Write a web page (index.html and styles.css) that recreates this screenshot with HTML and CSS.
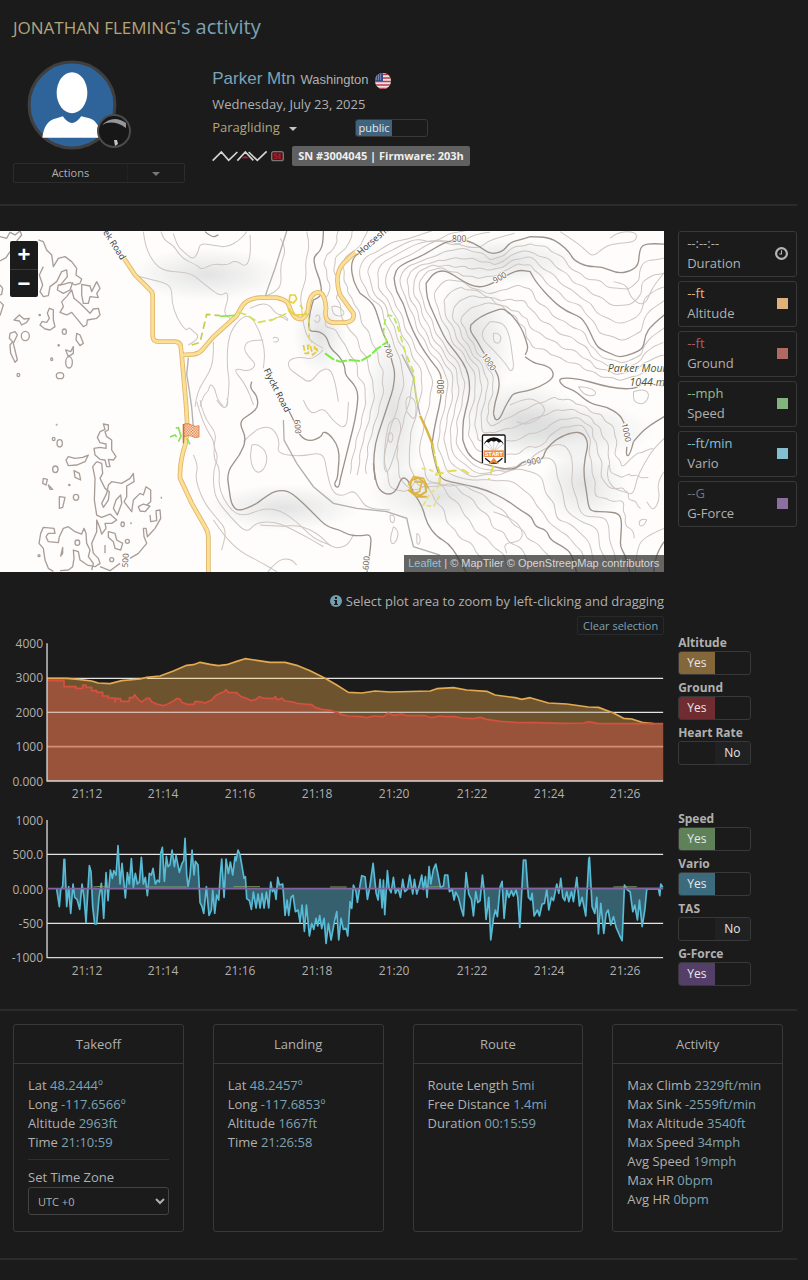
FILE: index.html
```html
<!doctype html>
<html lang="en">
<head>
<meta charset="UTF-8">
<meta name="viewport" content="width=device-width, initial-scale=1">
<title>Parker Mtn - Paragliding activity</title>
<link rel="stylesheet" href="styles.css">
</head>
<body>

<div class="page">

   <h1 class="title"><a class="pilot" href="#">JONATHAN FLEMING</a>'s activity</h1>

   <div class="summary">
      <div class="profile">
         <div class="avatar">
            <svg class="avatar-photo" viewBox="0 0 88 88" aria-label="Pilot">
               <circle cx="44" cy="44" r="42" fill="#2f649b" stroke="#3f3f40" stroke-width="3"/>
               <ellipse cx="44" cy="32" rx="15" ry="20" fill="#fff"/>
               <path d="M15,76 Q17,59 29,57 L35,55 Q44,68 53,55 L61,57 Q71,60 72,76z" fill="#fff"/>
            </svg>
            <svg class="avatar-badge" viewBox="0 0 36 36">
               <circle cx="18" cy="18" r="16" fill="#171718" stroke="#4b4b4c" stroke-width="2"/>
               <path d="M6,12 Q17,1 30,10 L30,15 Q17,6 6,12z" fill="#97979b"/>
               <path d="M18,27 l3,0 1,4 -3,2z" fill="#c5c5c5"/>
            </svg>
         </div>
         <button class="actions" type="button"><span class="actions-text">Actions</span><span class="actions-caret"><i class="caret"></i></span></button>
      </div>

      <div class="info">
         <div class="place">
            <a class="site" href="#">Parker Mtn</a> <span>Washington</span>
            <svg class="flag" viewBox="0 0 18 18">
               <clipPath id="flag-clip"><circle cx="9" cy="9" r="8"/></clipPath>
               <g clip-path="url(#flag-clip)">
                  <rect width="18" height="18" fill="#eee3e4"/>
                  <path d="M0,2.500h18M0,6h18M0,9.500h18M0,13h18M0,16.500h18" stroke="#b93a48" stroke-width="1.600"/>
                  <rect width="9" height="9" fill="#3b4b86"/>
                  <path d="M2,3h6M2,5h6M2,7h6" stroke="#c8cce0" stroke-width=".8" stroke-dasharray="1 1"/>
               </g>
            </svg>
         </div>
         <div class="date">Wednesday, July 23, 2025</div>
         <div class="sport-row">
            <button class="sport" type="button">Paragliding <i class="caret"></i></button>
            <label class="switch switch-public">
               <input type="checkbox" checked aria-label="Public activity">
               <span class="half on">public</span><span class="half"></span>
            </label>
         </div>
         <div class="device">
            <svg class="device-logo" viewBox="0 0 216 36" fill="none">
               <path d="M2,32 L28,6 L50,31 L76,6 M76,32 L100,6 L124,31 M110,6 L136,31 L164,4" stroke="#d5d5d5" stroke-width="5"/>
               <path d="M88,25 L100,18 L112,25z" fill="#b22336"/>
               <rect x="179" y="5" width="35" height="27" rx="6" fill="#5a1419" stroke="#77777a" stroke-width="4"/>
               <path d="M196,12 h-9 v6 h8 v7 h-9 M207,12 h-6 v13 h6 M201,18 h6" stroke="#b32333" stroke-width="3"/>
            </svg>
            <span class="device-label">SN #3004045 | Firmware: 203h</span>
         </div>
      </div>
   </div>

   <hr>

   <div class="row">
      <div class="map">
         <svg id="map" class="map-tiles" viewBox="0 0 1992 1023" preserveAspectRatio="xMidYMid slice" fill="none">
            <defs>
               <radialGradient id="shade">
                  <stop offset="0" stop-color="#777c82" stop-opacity=".2"/>
                  <stop offset="1" stop-color="#777c82" stop-opacity="0"/>
               </radialGradient>
               <pattern id="checks" width="8" height="8" patternUnits="userSpaceOnUse">
                  <rect width="8" height="8" fill="#e06a22"/><path d="M0,0h4v4h4v4h-4v-4h-4z" fill="#fff"/>
               </pattern>
            </defs>
            <rect width="1992" height="1023" fill="#fefdfc"/>
            <g fill="url(#shade)">
               <ellipse cx="620" cy="130" rx="230" ry="80"/>
               <ellipse cx="1560" cy="560" rx="190" ry="110"/>
               <ellipse cx="1700" cy="600" rx="260" ry="90"/>
               <ellipse cx="1180" cy="540" rx="90" ry="270"/>
               <ellipse cx="1420" cy="330" rx="120" ry="230"/>
               <ellipse cx="1320" cy="790" rx="220" ry="90"/>
               <ellipse cx="850" cy="830" rx="230" ry="70"/>
               <ellipse cx="1750" cy="760" rx="130" ry="120"/>
               <ellipse cx="960" cy="310" rx="80" ry="120"/>
               <ellipse cx="1500" cy="90" rx="240" ry="70"/>
            </g>

            <!-- contour lines are added here by script.js -->
            <g id="contours"></g>

            <!-- patches on the flat ground to the west -->
            <g class="patches" transform="translate(0,-18)">
               <path d="M0,35 20,40 30,22 45,30 60,18 65,30 50,48M0,108 18,98 30,80M0,180 8,190 5,208 0,210M0,230 10,240 0,272"/>
               <path d="M115,45 130,50 140,75 155,90 160,125 175,100 195,95 215,110 230,130 228,150 245,162 240,175 225,180 210,172 190,178 175,180 172,195 190,205 210,195 218,172"/>
               <path d="M130,125 118,150 128,180 120,200 130,215 145,212 150,185 170,170 185,140 200,135 202,155 180,182"/>
               <path d="M245,178 270,183 275,200 290,170 300,190 290,205 295,218 270,215 265,235 250,235 245,210z"/>
               <path d="M215,195 200,215 185,230 190,245 180,262 200,270 215,262 230,280 250,305 260,300 262,285 290,280 300,270 295,250 280,252 270,265 240,235 222,220z"/>
               <path d="M148,250 160,255 160,285 165,305 150,315 135,312 120,300 126,290 140,292 148,280 142,265z"/>
               <path d="M42,285 58,270 72,282 88,280 80,292 65,300 58,288z"/>
               <path d="M30,325 45,320 52,330 40,355 52,405 45,412 32,385 30,360 38,350 28,340z"/>
               <path d="M230,325 240,330 250,355 240,362 228,345zM197,375 212,380 220,365 220,385 205,395z"/>
               <ellipse cx="76" cy="333" rx="12" ry="14"/><ellipse cx="193" cy="320" rx="6" ry="8"/>
               <ellipse cx="180" cy="452" rx="11" ry="9"/><ellipse cx="207" cy="412" rx="10" ry="17"/>
               <ellipse cx="55" cy="450" rx="4" ry="5"/><ellipse cx="155" cy="403" rx="3" ry="4"/>
               <ellipse cx="119" cy="270" rx="2" ry="2"/><ellipse cx="176" cy="361" rx="2" ry="2"/>
            </g>
            <g class="patches" transform="translate(0,507)">
               <path d="M310,72 325,75 325,90 315,95 320,110 335,120 335,150 348,170 340,180 325,178 330,200 320,200 315,180 300,178 285,165 282,145 300,142 318,145 318,132 300,128 292,112 300,95 315,88z"/>
               <path d="M290,185 305,190 308,220 300,235 315,265 328,275 325,300 310,322 305,310 320,280 325,255 335,245 365,250 390,235 400,220 402,245 380,258 380,290 372,305 395,335 400,300 420,280 430,285 438,260 452,270 452,305 440,315"/>
               <path d="M290,185 278,200 285,235 283,300 290,345 305,352 330,342 350,360 335,370 315,370 318,385 305,402 300,385 290,360 290,395 275,430 280,460 295,475 300,490 285,500 262,495 240,480 235,455 220,450 222,475 218,500 205,510 180,512"/>
               <path d="M160,514 145,505 135,480 130,445 117,430 122,400 130,382 162,385 165,400 145,400 138,410 145,425 175,428 178,410 190,385 205,380 225,395 245,402 252,385 258,400 260,430 270,450 265,470 280,490 275,510"/>
               <path d="M340,325 348,300 362,285 365,310 352,345zM415,320 430,312 450,318 435,335 420,333z"/>
               <path d="M450,345 452,365 470,362 468,332 480,330 482,355 465,385 442,410 438,385 430,385 432,410 440,430 415,460 390,475M300,500 330,512 360,490"/>
               <path d="M325,395 345,400 350,420 368,430 362,450 345,445 340,425 325,412z"/>
               <path d="M198,180 205,170 225,175 248,172 265,165 255,185 230,195 205,197z"/>
               <path d="M222,212 238,220 242,240 225,232zM130,235 142,238 138,255 128,250zM145,255 158,268 150,268zM178,290 195,292 188,322 178,325z"/>
               <path d="M182,468 188,442 188,460zM315,435V460M484,290v6"/>
               <ellipse cx="179" cy="130" rx="8" ry="11"/><ellipse cx="161" cy="117" rx="4" ry="5"/>
               <ellipse cx="166" cy="208" rx="8" ry="10"/><ellipse cx="228" cy="292" rx="8" ry="9"/>
               <ellipse cx="232" cy="428" rx="7" ry="8"/><ellipse cx="368" cy="373" rx="5" ry="7"/>
               <ellipse cx="382" cy="424" rx="6" ry="6"/><ellipse cx="335" cy="479" rx="6" ry="6"/>
               <ellipse cx="170" cy="74" rx="1" ry="1"/><ellipse cx="208" cy="255" rx="2" ry="2"/>
               <ellipse cx="117" cy="467" rx="3" ry="3"/><ellipse cx="393" cy="370" rx="1" ry="1"/>
            </g>

            <path class="trail" d="M860,0 825,112 800,182 795,200M850,567 852,627 890,697 940,767 1000,817 1070,832 1160,842 1220,862 1230,907 1240,947 1320,972M565,380 560,430 568,480 575,530 580,590M1205,370 1240,440 1250,510 1260,552"/>
            <g class="road" transform="translate(0,-18)">
               <path d="M370,97 405,150 450,195 Q458,202 458,212V335Q460,350 475,350H525Q542,352 542,365L545,390 558,540 562,605 557,655 Q538,710 540,760L575,835 615,905Q625,920 625,940V1045M545,390 580,388Q600,386 612,368 L640,335 710,272 725,245Q740,220 780,218H830Q865,225 868,245 Q880,285 905,282 925,270 925,245 930,200 960,202 975,210 978,250 970,290 1000,293L1035,293Q1065,290 1060,265 L1020,210 Q1000,150 1030,115 L1065,82"/>
               <path class="road-fill" d="M370,97 405,150 450,195 Q458,202 458,212V335Q460,350 475,350H525Q542,352 542,365L545,390 558,540 562,605 557,655 Q538,710 540,760L575,835 615,905Q625,920 625,940V1045M545,390 580,388Q600,386 612,368 L640,335 710,272 725,245Q740,220 780,218H830Q865,225 868,245 Q880,285 905,282 925,270 925,245 930,200 960,202 975,210 978,250 970,290 1000,293L1035,293Q1065,290 1060,265 L1020,210 Q1000,150 1030,115 L1065,82"/>
            </g>

            <!-- flight track -->
            <g class="track" transform="translate(780,-18)">
               <path stroke="#c5cc4a" stroke-dasharray="22 12" d="M-205,360 -180,352 -170,310 -160,268 -120,272"/>
               <path stroke="#8ee45a" d="M-120,274 -75,271"/>
               <path stroke="#d5df55" stroke-dasharray="24 9" d="M-65,262 -40,270 -5,292 40,283 75,268 90,250"/>
               <path stroke="#e8cf3c" d="M88,220 90,210 105,210 110,222 100,234 88,230zM85,255 105,270 140,268"/>
               <path stroke="#e0d84a" stroke-dasharray="14 10" d="M120,240 145,275 148,305 147,340 155,352M160,370 185,375"/>
               <path stroke="#e4c840" stroke-dasharray="18 5" d="M130,360 135,385 145,385 143,362 150,360 158,390 172,378 160,360"/>
               <path stroke="#7bea4d" stroke-width="6" stroke-dasharray="34 5" d="M195,385 220,403 240,410 270,405 302,408 330,392 350,372 380,352"/>
               <path stroke="#a5ea52" stroke-dasharray="18 9" d="M380,352 370,320 375,285 385,270 400,274 412,302"/>
               <path stroke="#c9e650" stroke-dasharray="20 12" d="M412,302 425,345 435,380 460,440 467,510 475,545"/>
               <path stroke="#d9b440" stroke-width="7" d="M480,572 500,615 518,660"/>
               <path stroke="#ddd04a" stroke-width="6" stroke-dasharray="28 5" d="M518,660 528,715 540,745 538,775"/>
               <path stroke="#e2dd52" stroke-width="6" stroke-dasharray="26 14" d="M525,750 570,738 610,735 635,752M700,722 685,765"/>
               <path stroke="#d9b440" stroke-width="6" d="M455,765 475,758 495,775 498,800 480,812 455,800 450,780zM445,795 470,815 500,815"/>
               <path stroke="#ddb74e" d="M462,770 485,772 478,800 462,805M445,780 460,755 490,760 505,790"/>
               <path stroke="#e6df7a" stroke-dasharray="14 8" d="M485,730 510,735 540,750 535,785 510,805 490,840 520,845 540,810"/>
            </g>

            <g class="map-text">
               <g class="street">
                  <text transform="translate(308,4) rotate(57)">ek Road</text>
                  <text transform="translate(1081,74) rotate(-41)">Horseshoe</text>
                  <text transform="translate(790,418) rotate(63)">Flyckt Road</text>
               </g>
               <g class="height">
                  <text x="1356" y="34">800</text>
                  <text transform="translate(1485,158) rotate(-30)">900</text>
                  <text transform="translate(1443,374) rotate(56)">1000</text>
                  <text transform="translate(1150,342) rotate(72)">700</text>
                  <text transform="translate(1332,489) rotate(-90)">800</text>
                  <text transform="translate(882,566) rotate(85)">600</text>
                  <text transform="translate(1105,1018) rotate(-85)">600</text>
                  <text transform="translate(383,1010) rotate(-85)">500</text>
                  <text transform="translate(1582,704) rotate(-12)">900</text>
                  <text transform="translate(1864,578) rotate(78)">1000</text>
               </g>
               <g class="peak">
                  <text x="1823" y="422">Parker Mountain</text>
                  <text x="1888" y="464">1044 m</text>
               </g>
            </g>

            <!-- landing flag -->
            <path d="M550,579 V637" stroke="#e06a22" stroke-width="4"/>
            <path d="M552,579 Q565,575 575,582 T597,584 V618 Q585,622 575,616 T552,618z" fill="url(#checks)" stroke="#e06a22" stroke-width="2"/>
            <path d="M527,591 535,590 543,615 535,632M510,618 525,612 530,618M560,622 570,640" stroke="#8be05a" stroke-width="5"/>
            <!-- takeoff marker -->
            <g transform="translate(1445,610)">
               <rect width="72" height="88" rx="6" fill="#fff"/>
               <path d="M2,86V6Q2,2 6,2H66Q70,2 70,6V86" stroke="#111" stroke-width="4"/>
               <path d="M6,31 Q12,12 36,9 Q60,12 66,31 L58,22 51,25 44,19 36,22 28,19 21,25 14,22z" fill="#111"/>
               <path d="M8,30 32,48M21,25 34,48M36,22V48M51,25 38,48M64,30 40,48" stroke="#777" stroke-width="1"/>
               <rect x="6" y="48" width="60" height="20" fill="#f08a3c"/>
               <text x="36" y="66" class="start">START</text>
               <path d="M10,72 28,86H44L62,72" stroke="#111" stroke-width="4"/>
               <path d="M36,70 52,90 36,84 20,90z" fill="#f08a3c"/>
            </g>
         </svg>
         <div class="zoom">
            <button type="button" aria-label="Zoom in">+</button>
            <button type="button" aria-label="Zoom out">−</button>
         </div>
         <div class="attribution"><a href="#">Leaflet</a> | © MapTiler © OpenStreepMap contributors</div>
      </div>

      <div class="side stats">
         <div class="stat">
            <div><div class="value">--:--:--</div>Duration</div>
            <svg class="clock" viewBox="0 0 12 12" fill="none" stroke="#b5b5b5"><circle cx="6" cy="6" r="5" stroke-width="2"/><path d="M6,3v3.500H4" stroke-width="1"/></svg>
         </div>
         <div class="stat altitude"><div><div class="value">--ft</div>Altitude</div><i class="dot"></i></div>
         <div class="stat ground"><div><div class="value">--ft</div>Ground</div><i class="dot"></i></div>
         <div class="stat speed"><div><div class="value">--mph</div>Speed</div><i class="dot"></i></div>
         <div class="stat vario"><div><div class="value">--ft/min</div>Vario</div><i class="dot"></i></div>
         <div class="stat gforce"><div><div class="value">--G</div>G-Force</div><i class="dot"></i></div>
      </div>
   </div>

   <div class="row plots">
      <div class="plot-area">
         <div class="hint">
            <svg class="hint-icon" viewBox="0 0 12 12"><circle cx="6" cy="6" r="6" fill="#6f9fb0"/><path d="M5,2h2v2H5zM4,5h3v4h1v1H4V9h1V6H4z" fill="#1b1b1b"/></svg>
            Select plot area to zoom by left-clicking and dragging
         </div>
         <div class="clear-row"><button class="clear" type="button">Clear selection</button></div>

         <svg class="chart" viewBox="0 0 664 166">
            <g transform="translate(0,-6) scale(.33333)">
               <path d="M141,145H1989M141,247H1989" stroke="#e4e4e4" stroke-width="4"/>
               <path fill="#6e542e" d="M141,145 200,145 235,148 275,153 295,159 330,161 365,152 420,147 440,142 480,138 520,123 560,106 580,104 600,97 630,103 655,107 680,104 710,94 735,86 770,91 810,97 855,97 890,106 930,122 975,145 1010,165 1045,187 1085,189 1125,183 1170,186 1290,183 1310,176 1360,173 1400,180 1460,184 1485,195 1545,203 1565,208 1590,203 1645,219 1700,222 1765,231 1795,232 1840,249 1870,265 1895,267 1930,278 1989,281V453H141z"/>
               <path d="M141,247H1830" stroke="#fff" stroke-opacity=".85" stroke-width="3"/>
               <path d="M440,145H975" stroke="#ead8b0" stroke-width="4"/>
               <path fill="#99533b" d="M141,152H192V170H228V175H248V165H258V172H275V182H290V187H308V198H325V204H345V216L348,206H362V214H388V203H398L404,194 412,205 425,216 440,205 448,205 455,215 470,222 490,227 505,221 520,213 530,205 540,207 545,217 560,223 582,223 585,214 605,216 615,219 635,210 645,198 660,190 672,185 678,179 685,187 710,188 722,199 742,206 752,212 768,208 778,200 790,204 820,206 826,200 832,210 845,204 855,213 880,216 890,220 910,222 935,224 945,232 965,238 990,241 1010,247 1025,254 1045,258 1085,260 1100,263 1120,258 1150,260 1165,249 1180,256 1205,252 1220,257 1275,257 1295,263 1320,258 1340,260 1365,260 1385,264 1420,266 1440,262 1460,268 1500,274 1545,277 1600,278 1690,280 1750,279 1765,275 1795,281 1989,281V453H141z"/>
               <path d="M141,247H1010" stroke="#fff" stroke-opacity=".8" stroke-width="3"/>
               <path d="M141,350H1989" stroke="#d38f76" stroke-width="5"/>
               <path class="line altitude-line" d="M141,145 200,145 235,148 275,153 295,159 330,161 365,152 420,147 440,142 480,138 520,123 560,106 580,104 600,97 630,103 655,107 680,104 710,94 735,86 770,91 810,97 855,97 890,106 930,122 975,145 1010,165 1045,187 1085,189 1125,183 1170,186 1290,183 1310,176 1360,173 1400,180 1460,184 1485,195 1545,203 1565,208 1590,203 1645,219 1700,222 1765,231 1795,232 1840,249 1870,265 1895,267 1930,278 1960,281"/>
               <path class="line ground-line" d="M141,152H192V170H228V175H248V165H258V172H275V182H290V187H308V198H325V204H345V216L348,206H362V214H388V203H398L404,194 412,205 425,216 440,205 448,205 455,215 470,222 490,227 505,221 520,213 530,205 540,207 545,217 560,223 582,223 585,214 605,216 615,219 635,210 645,198 660,190 672,185 678,179 685,187 710,188 722,199 742,206 752,212 768,208 778,200 790,204 820,206 826,200 832,210 845,204 855,213 880,216 890,220 910,222 935,224 945,232 965,238 990,241 1010,247 1025,254 1045,258 1085,260 1100,263 1120,258 1150,260 1165,249 1180,256 1205,252 1220,257 1275,257 1295,263 1320,258 1340,260 1365,260 1385,264 1420,266 1440,262 1460,268 1500,274 1545,277 1600,278 1690,280 1750,279 1765,275 1795,281 1989,281"/>
               <path class="axis" d="M141,40V453H1989"/>
            </g>
            <g class="tick tick-y"><text x="43" y="12">4000</text><text x="43" y="46">3000</text><text x="43" y="81">2000</text><text x="43" y="115">1000</text><text x="43" y="150">0.000</text></g>
            <g class="tick tick-x"><text x="87" y="162">21:12</text><text x="163" y="162">21:14</text><text x="240" y="162">21:16</text><text x="317" y="162">21:18</text><text x="394" y="162">21:20</text><text x="472" y="162">21:22</text><text x="549" y="162">21:24</text><text x="625" y="162">21:26</text></g>
         </svg>

         <svg class="chart chart-vario" viewBox="0 0 664 166">
            <g transform="translate(0,-3) scale(.33333)">
               <path d="M141,133H1989M141,340H1989" stroke="#e4e4e4" stroke-width="4"/>
               <path class="line vario-line" d="M170,237 178,290 182,240 188,228 192,148 194,148 200,290 206,230 212,310 219,222 224,262 231,268 239,298 246,222 252,262 258,337 264,235 268,167 273,185 278,290 284,342 290,342 297,262 304,220 311,325 318,188 324,272 331,180 337,205 341,182 348,195 354,107 360,222 366,160 372,222 376,264 382,188 388,222 394,146 400,232 406,190 412,222 418,216 424,142 430,222 436,202 442,257 448,190 454,195 459,175 466,222 472,210 478,216 482,130 487,112 493,214 499,139 504,170 510,164 516,120 523,170 528,136 538,187 546,160 551,152 555,85 560,195 564,230 570,195 576,120 582,195 586,154 594,165 600,278 606,290 611,310 619,230 627,316 634,300 638,240 644,310 650,255 656,270 661,190 665,147 672,262 678,147 685,190 691,156 698,195 705,140 708,152 714,120 720,135 726,170 732,205 736,200 740,266 748,272 754,298 760,246 768,294 774,252 780,294 786,250 792,294 799,246 806,294 812,216 817,245 823,238 828,268 833,202 838,225 848,222 855,316 861,270 866,316 873,262 879,256 886,305 894,300 900,337 906,285 913,364 919,285 928,378 935,340 941,358 948,325 953,348 959,317 965,356 972,325 978,400 985,340 993,390 1002,340 1010,305 1016,390 1023,325 1030,358 1038,355 1043,378 1050,275 1055,295 1060,225 1068,245 1072,277 1080,225 1085,197 1095,200 1102,268 1108,238 1119,160 1128,248 1134,270 1140,208 1146,294 1150,210 1154,314 1162,182 1167,235 1173,248 1180,202 1186,250 1194,235 1201,262 1208,208 1214,245 1222,238 1229,195 1238,252 1243,208 1250,252 1258,225 1265,195 1270,238 1276,200 1281,262 1287,170 1292,222 1300,178 1307,162 1313,190 1321,232 1330,228 1334,195 1343,195 1348,245 1356,238 1362,270 1367,246 1375,262 1384,298 1390,318 1398,188 1406,252 1414,268 1420,318 1427,245 1433,278 1440,272 1447,195 1452,240 1458,328 1466,262 1472,390 1480,325 1486,300 1492,320 1500,230 1506,214 1512,325 1520,240 1526,262 1534,242 1540,258 1548,240 1553,262 1559,352 1564,262 1570,150 1577,150 1585,262 1592,270 1596,250 1602,318 1612,300 1618,318 1626,282 1633,280 1640,238 1646,300 1654,262 1660,272 1670,222 1676,250 1682,205 1688,262 1694,272 1700,245 1706,275 1714,245 1720,275 1730,202 1738,288 1746,262 1757,318 1766,148 1768,142 1776,290 1784,310 1790,262 1795,372 1802,280 1811,370 1818,310 1824,300 1832,345 1840,320 1848,352 1858,375 1866,392 1873,225 1882,240 1890,245 1898,305 1904,285 1912,330 1918,270 1926,350 1934,300 1940,237 1975,237 1979,257 1982,222 1988,232"/>
               <path class="axis" d="M141,30V443H1989"/>
               <path d="M280,231Q300,228 320,231M440,231H560M700,230H780M990,231H1040M1280,231 1320,230M1840,231 1910,230" stroke="#7ea35f" stroke-width="3"/>
               <path d="M141,236H1989" stroke="#80649f" stroke-width="5"/>
            </g>
            <g class="tick tick-y"><text x="43" y="12">1000</text><text x="43" y="46">500.0</text><text x="43" y="81">0.000</text><text x="43" y="115">-500</text><text x="43" y="149">-1000</text></g>
            <g class="tick tick-x"><text x="87" y="162">21:12</text><text x="163" y="162">21:14</text><text x="240" y="162">21:16</text><text x="317" y="162">21:18</text><text x="394" y="162">21:20</text><text x="472" y="162">21:22</text><text x="549" y="162">21:24</text><text x="625" y="162">21:26</text></g>
         </svg>
      </div>

      <div class="side toggles">
         <div class="toggle altitude"><label for="t-altitude">Altitude</label><label class="switch"><input id="t-altitude" type="checkbox" checked><span class="half on">Yes</span><span class="half"></span></label></div>
         <div class="toggle ground"><label for="t-ground">Ground</label><label class="switch"><input id="t-ground" type="checkbox" checked><span class="half on">Yes</span><span class="half"></span></label></div>
         <div class="toggle"><label for="t-hr">Heart Rate</label><label class="switch"><input id="t-hr" type="checkbox"><span class="half"></span><span class="half off">No</span></label></div>
         <div class="toggle toggle-first speed"><label for="t-speed">Speed</label><label class="switch"><input id="t-speed" type="checkbox" checked><span class="half on">Yes</span><span class="half"></span></label></div>
         <div class="toggle vario"><label for="t-vario">Vario</label><label class="switch"><input id="t-vario" type="checkbox" checked><span class="half on">Yes</span><span class="half"></span></label></div>
         <div class="toggle"><label for="t-tas">TAS</label><label class="switch"><input id="t-tas" type="checkbox"><span class="half"></span><span class="half off">No</span></label></div>
         <div class="toggle gforce"><label for="t-g">G-Force</label><label class="switch"><input id="t-g" type="checkbox" checked><span class="half on">Yes</span><span class="half"></span></label></div>
      </div>
   </div>

   <hr>

   <div class="cards">
      <div class="card">
         <h2>Takeoff</h2>
         <div class="card-body">
            <p>Lat <b>48.2444º</b></p>
            <p>Long <b>-117.6566º</b></p>
            <p>Altitude <b>2963ft</b></p>
            <p>Time <b>21:10:59</b></p>
            <div class="zone">
               <label for="zone">Set Time Zone</label>
               <select id="zone"><option>UTC +0</option></select>
            </div>
         </div>
      </div>
      <div class="card">
         <h2>Landing</h2>
         <div class="card-body">
            <p>Lat <b>48.2457º</b></p>
            <p>Long <b>-117.6853º</b></p>
            <p>Altitude <b>1667ft</b></p>
            <p>Time <b>21:26:58</b></p>
         </div>
      </div>
      <div class="card">
         <h2>Route</h2>
         <div class="card-body">
            <p>Route Length <b>5mi</b></p>
            <p>Free Distance <b>1.4mi</b></p>
            <p>Duration <b>00:15:59</b></p>
         </div>
      </div>
      <div class="card">
         <h2>Activity</h2>
         <div class="card-body">
            <p>Max Climb <b>2329ft/min</b></p>
            <p>Max Sink <b>-2559ft/min</b></p>
            <p>Max Altitude <b>3540ft</b></p>
            <p>Max Speed <b>34mph</b></p>
            <p>Avg Speed <b>19mph</b></p>
            <p>Max HR <b>0bpm</b></p>
            <p>Avg HR <b>0bpm</b></p>
         </div>
      </div>
   </div>

   <hr>
</div>

<script src="script.js"></script>
</body>
</html>
```

FILE: styles.css
```css
* {
   box-sizing: border-box;
}

body {
   margin: 0;
   background: #1b1b1b;
   color: #b0b0b0;
   font-family: "Open Sans", "Noto Sans", sans-serif;
   font-size: 13px;
   line-height: 20px;
}

h1, h2, p {
   margin: 0;
   font-weight: normal;
}

a {
   text-decoration: none;
}

b {
   font-weight: normal;
   color: #7ba3b5;
}

button, select {
   font-family: inherit;
   color: inherit;
}

hr {
   margin: 0;
   border: 0;
   border-top: 2px solid #2b2b2b;
}

.page {
   padding-right: 11px;
}

.title {
   padding: 12px 13px 0;
   font-size: 20px;
   line-height: 30px;
   color: #7ba3b5;
}

.pilot {
   font-size: 17px;
   color: #b3a57d;
}

.summary {
   display: grid;
   grid-template-columns: 1fr 3fr;
   padding-top: 17px;
   height: 161px;
}

.profile {
   padding: 0 14px 0 13px;
}

.avatar {
   position: relative;
   height: 103px;
   padding-left: 14px;
}

.avatar-photo {
   display: block;
   width: 90px;
   height: 90px;
}

.avatar-badge {
   position: absolute;
   left: 83px;
   top: 53px;
   width: 36px;
   height: 36px;
}

.actions {
   display: flex;
   width: 100%;
   height: 20px;
   padding: 0;
   border: 1px solid #2c2c2c;
   border-radius: 2px;
   background: none;
   font-size: 11px;
   line-height: 18px;
}

.actions-text {
   flex: 2;
   border-right: 1px solid #222;
}

.actions-caret {
   flex: 1;
}

.caret {
   display: inline-block;
   border: 4px solid transparent;
   border-top-color: currentColor;
   border-bottom: 0;
   vertical-align: middle;
}

.actions-caret .caret {
   color: #777;
}

.info {
   padding-left: 13px;
}

.place {
   display: flex;
   align-items: baseline;
   gap: 5px;
   height: 34px;
   padding-top: 9px;
   font-family: "Liberation Sans", Arial, sans-serif;
}

.site {
   font-size: 17px;
   color: #7ba3b5;
}

.flag {
   width: 18px;
   height: 18px;
   align-self: flex-start;
   margin-top: 3px;
}

.sport-row {
   display: flex;
   align-items: center;
   height: 26px;
}

.sport {
   width: 143px;
   padding: 0;
   border: 0;
   background: none;
   font-size: 13px;
   color: #b3a57d;
   text-align: left;
}

.sport .caret {
   margin-left: 6px;
   color: #c5c5c5;
}

.device {
   display: flex;
   align-items: center;
   gap: 8px;
   height: 31px;
}

.device-logo {
   width: 72px;
   height: 12px;
}

.device-label {
   padding: 0 6px;
   border-radius: 2px;
   background: #606060;
   color: #eee;
   font-size: 11px;
   font-weight: bold;
}

.row {
   display: grid;
   grid-template-columns: 5fr 1fr;
   padding-top: 25px;
}

.side {
   padding-left: 14px;
}

/* map */
.map {
   position: relative;
   height: 341px;
   overflow: hidden;
}

.map-tiles {
   display: block;
   width: 100%;
   height: 100%;
}

.contour {
   stroke: #cdc5c0;
   stroke-width: 3;
}

.contour-index {
   stroke: #9d938b;
   stroke-width: 4;
}

.patches {
   stroke: #a99e97;
   stroke-width: 4;
   stroke-linejoin: round;
}

.trail {
   stroke: #b3b0ae;
   stroke-width: 4;
}

.road {
   stroke: #dfb468;
   stroke-width: 14;
   stroke-linejoin: round;
}

.road-fill {
   stroke: #fbdf95;
   stroke-width: 9;
}

.track {
   stroke-width: 5;
   stroke-linejoin: round;
}

.map-text {
   font-family: "Noto Sans", sans-serif;
   stroke: #fff;
   stroke-width: 5;
   paint-order: stroke;
}

.street {
   font-size: 27px;
   fill: #444;
}

.height {
   font-size: 25px;
   fill: #7a6350;
}

.peak {
   font-family: "Open Sans", sans-serif;
   font-size: 32px;
   font-style: italic;
   fill: #4f5333;
}

.start {
   font: bold 18px "Liberation Mono", monospace;
   text-anchor: middle;
   fill: #fff;
}

.zoom {
   position: absolute;
   left: 10px;
   top: 10px;
   width: 28px;
   background: #1b1b1b;
   border-radius: 2px;
}

.zoom button {
   display: block;
   width: 28px;
   height: 28px;
   padding: 0;
   border: 0;
   background: none;
   color: #fff;
   font: bold 22px/28px "Liberation Sans", Arial, sans-serif;
}

.zoom button + button {
   border-top: 1px solid #3a3a3a;
}

.attribution {
   position: absolute;
   right: 0;
   bottom: 0;
   padding: 0 5px 0 4px;
   background: rgba(50, 50, 50, .75);
   color: #d5d5d5;
   font: 11px/17px "Liberation Sans", Arial, sans-serif;
}

.attribution a {
   color: #8cc4dc;
}

/* live values beside the map */
.stats {
   display: flex;
   flex-direction: column;
   gap: 4px;
}

.stat {
   display: flex;
   align-items: center;
   justify-content: space-between;
   height: 46px;
   padding: 0 8px 2px;
   border: 1px solid #383838;
   border-radius: 3px;
}

.clock {
   width: 13px;
   height: 13px;
}

.dot {
   width: 11px;
   height: 11px;
}

.altitude .value { color: #deb887; }
.altitude .dot { background: #deb27a; }
.altitude .on { background: #84663b; }
.ground .value { color: #a85f66; }
.ground .dot { background: #b06a62; }
.ground .on { background: #6f2d31; }
.speed .value { color: #8dc08a; }
.speed .dot { background: #84b47e; }
.speed .on { background: #5f8158; }
.vario .value { color: #82c1dc; }
.vario .dot { background: #84bfd0; }
.vario .on { background: #3b6b7c; }
.gforce .value { color: #77717f; }
.gforce .dot { background: #8b6fa0; }
.gforce .on { background: #533f68; }

/* plots */
.plots {
   padding: 18px 0 18px;
}

.hint {
   display: flex;
   align-items: center;
   justify-content: flex-end;
   gap: 4px;
   height: 22px;
}

.hint-icon {
   width: 12px;
   height: 12px;
}

.clear-row {
   display: flex;
   justify-content: flex-end;
   height: 24px;
   padding-top: 4px;
}

.clear {
   height: 19px;
   padding: 0 5px;
   border: 1px solid #262a2c;
   border-radius: 2px;
   background: none;
   color: #7ba3b5;
   font-size: 11px;
   line-height: 16px;
}

.chart {
   display: block;
   width: 100%;
   fill: none;
}

.chart-vario {
   margin-top: 11px;
}

.line {
   stroke-width: 5;
   stroke-linejoin: round;
}

.altitude-line {
   stroke: #e3a951;
}

.ground-line {
   stroke: #d4503f;
}

.vario-line {
   stroke: #58bbd6;
   fill: #36606e;
}

.axis {
   stroke: #d8d8d8;
   stroke-width: 4;
}

.tick {
   font-size: 12px;
   fill: #b0b0b0;
}

.tick-y {
   text-anchor: end;
}

.tick-x {
   text-anchor: middle;
}

.toggles {
   padding-top: 45px;
}

.toggle {
   margin-bottom: 5px;
   font-size: 12px;
   line-height: 16px;
}

.toggle-first {
   margin-top: 46px;
}

.toggle > label:first-child {
   display: block;
   font-weight: bold;
}

.switch {
   position: relative;
   display: flex;
   width: 73px;
   height: 24px;
   border: 1px solid #383838;
   border-radius: 3px;
   overflow: hidden;
}

.switch input {
   position: absolute;
   inset: 0;
   margin: 0;
   opacity: 0;
}

.half {
   flex: 1;
   color: #e8e8e8;
   font-size: 12px;
   line-height: 22px;
   text-align: center;
}

.off {
   background: #1f2123;
}

.switch-public {
   height: 18px;
   margin-top: 2px;
}

.switch-public .half {
   font-size: 11px;
   line-height: 16px;
}

.switch-public .on {
   background: #41647e;
}

/* cards */
.cards {
   display: grid;
   grid-template-columns: repeat(4, 1fr);
   gap: 29px;
   padding: 13px 14px 26px 13px;
}

.card {
   min-height: 208px;
   border: 1px solid #383838;
   border-radius: 3px;
}

.card h2 {
   border-bottom: 1px solid #383838;
   font-size: 13px;
   line-height: 38px;
   text-align: center;
}

.card-body {
   padding: 12px 14px;
   line-height: 19px;
   white-space: nowrap;
}

.zone {
   margin-top: 7px;
   padding-top: 8px;
   border-top: 1px solid #303030;
}

.zone label {
   display: block;
}

.zone select {
   width: 100%;
   height: 28px;
   padding: 0 5px;
   border: 1px solid #444;
   border-radius: 3px;
   background: #1b1b1b;
   font-size: 11px;
}
```

FILE: script.js
```js
// Contour lines for the map. Index contours are listed by height, the lines
// between two of them are interpolated. Sections of a pair are kept in step.
var OFFSET_X = 780;
var OFFSET_Y = -18;

var c600 = [
   "190,10 190,50 180,80 160,95 165,130 180,165 185,200 180,215 160,225",
   "160,225 150,260 145,300 150,320 175,318 200,335 210,370 240,395 255,425 255,450 280,475 293,500 293,530 285,585 270,645 250,725 240,765"
];
var c700from600 = [
   "370,10 340,60 310,80 285,90 272,120 280,170 300,205",
   "300,205 340,235 355,280 370,330 385,355 395,410 405,440 400,490 388,525 365,595 345,655 340,715 345,765"
];
var c700 = [
   "480,0 420,18 360,50 310,80 285,90 272,120",
   "272,120 280,170 300,205 340,235 355,280 370,330 385,355 395,410 405,440 400,490 388,525 365,595 345,655 340,715",
   "340,715 345,765 360,800 390,810 410,795 425,755 445,765 460,805 475,825 490,855 500,895 530,935 565,955 590,990 620,1045"
];
var c800from700 = [
   "830,35 778,45 750,52 728,80 690,88 660,65 620,45 575,45 540,60 515,75 480,95 440,112 410,130 402,160",
   "402,160 408,200 430,235 440,270 455,310 480,360 510,405 540,440 545,470 543,520 530,575 520,625 515,665",
   "515,665 525,715 540,760 570,770 620,780 680,795 740,825 780,855 815,875 825,905 860,915 870,945 910,965 935,987 950,1045"
];
var c800 = [
   "1215,58 1180,55 1145,60 1137,85 1135,120 1110,140 1070,145 1025,125 980,125 940,105 930,85 900,55 865,37 810,35",
   "810,35 778,45 750,52 728,80 690,88 660,65 620,45 575,45 540,60 515,75 480,95 440,112 410,130 402,160",
   c800from700[1],
   c800from700[2]
];
var c900 = [
   "1212,270 1175,300 1155,330 1150,370 1120,385 1080,398 1050,385 1015,370 1000,345 980,300 960,275 920,260 880,230 830,175 810,140",
   "810,140 780,135 750,145 690,180 650,188 610,170 580,150 550,135 520,145 498,175",
   "498,175 500,220 520,265 540,310 560,350 590,385 620,430 630,480 625,525 608,585 608,645",
   "608,645 622,685 650,710 700,725 740,733 770,730 790,708 825,712 850,700 855,675 890,640 940,620 970,625 985,655 975,695 970,745 980,805 985,845 995,860 1040,860 1075,865 1085,885 1082,935 1080,965 1095,990 1110,1045"
];
var c1000 = [
   "1212,470 1150,470 1080,482 1020,472 960,455 900,440 860,418 820,415 795,390",
   "795,390 805,375 798,345 780,300 735,248 700,258 660,275 632,300",
   "632,300 630,320 650,345 665,375 710,440 718,470 715,500 705,530 700,565",
   "700,565 706,590 735,560 800,510 880,475 940,500 990,537 1040,545 1080,570 1092,595 1085,650 1098,693 1120,650 1140,625 1170,600 1212,575"
];

var extraIndex = [
   "795,395 820,415 855,420 878,435 880,460 840,485 800,498 760,505 750,520 735,545 720,580 706,587 700,565",
   "1215,485 1150,470 1130,490 1080,492 1020,480 960,462 910,458 895,465 910,485 940,495 965,515",
   "240,765 238,785 228,787 222,775 232,762 235,725 238,690 230,655 205,625 188,620 185,635 150,650 120,635 108,600 85,555",
   "-10,835 30,805 60,795 90,800 130,835 165,870 200,905 240,915 265,930 300,933 333,927 332,965 320,1045",
   "-10,835 -60,862 -85,842 -92,800 -100,740 -60,690 -40,640 -65,590 -25,565 -5,545 -10,510 -30,490 -25,470",
   "1120,650 1110,690 1098,693 1100,665",
   "1212,950 1190,980 1180,1045",
   "-165,20 -145,38 -125,30"
];

var extra = [
   "-350,20 -345,65 -315,120 -280,140 -210,142 -170,175 -120,215 -100,200 -95,220 -110,265 -90,280",
   "-297,20 -290,45 -260,60 -235,100 -190,120 -175,135 -140,115 -100,122 -75,105 -40,128 -28,85 -30,30",
   "-260,25 -250,60 -230,80 -200,105 -185,80 -180,55 -140,60 -100,68 -60,45 -40,20",
   "-380,150 -320,165 -265,180 -265,230 -250,280 -220,320 -215,305 -200,320 -185,330 -190,345 -215,360",
   "-195,545 -190,500 -150,440 -140,400 -140,350",
   "-100,545 -90,480 -100,420 -95,330 -60,280 -30,270 0,320 15,380 10,430",
   "-180,545 -170,510 -155,500 -150,475 -135,490 -130,520 -110,545",
   "10,345 -35,345 -50,370 -35,395 -10,420 -35,440 -70,430 -75,440 -50,470 -30,510 -20,540",
   "140,20 150,60 135,110 140,160 120,210 125,250 130,300 145,345 190,370",
   "60,40 80,70 60,120 65,180 40,205 10,215",
   "-30,250 0,235 30,240 45,265 80,275 85,290 60,270 30,290",
   "38,340 45,335 58,342 50,352 40,350",
   "190,375 160,405 120,395 85,405 85,430 120,455 150,475 180,435 210,430 225,470 235,530",
   "215,245 230,240 255,262 245,275 220,270 215,245",
   "165,275 175,265 182,285 170,295 163,285",
   "-180,525 -170,575 -130,625 -140,665 -125,695 -140,735 -140,785 -130,825 -90,875 -40,925 -15,895 20,890 60,895 130,930 190,965",
   "-130,525 -110,555 -95,535 -100,520",
   "-50,650 -20,620 10,605 40,610 60,650 50,685 120,695 190,680 200,740 215,800 245,815 280,795 300,820 320,850 390,855",
   "-190,530 -170,600 -135,650 -140,700 -120,730 -125,790 -90,855 -50,875 10,850 60,855 110,890 160,940 210,960",
   "-200,690 -185,720 -195,760 -170,830 -130,880 -100,915 -115,975",
   "-140,885 -110,930 -60,980 0,1010 50,1040",
   "0,900 60,905 120,900 180,930 215,970 260,965 280,930",
   "20,1045 50,1005 90,1000 110,1020",
   "130,525 150,575 190,545 220,590 260,615 265,530",
   "-25,660 -10,655 20,680 20,720 0,745 -20,735 -30,700 -25,660",
   "385,625 395,620 400,640 392,655 383,645 385,625",
   "385,600 405,570 425,600 415,650 385,745 370,735 375,650 385,600",
   "690,290 665,315 668,345 700,375 740,420 750,440 762,430 755,380 750,340 735,300 710,290 690,290",
   "700,325 698,350 715,357 725,340 715,325 700,325",
   "750,540 780,525 820,520 860,550 840,580 800,600 770,590",
   "955,485 980,485 1010,500 1000,515 970,508 955,485",
   "1120,500 1150,490 1170,510 1150,540 1120,530 1120,500",
   "1050,40 1070,20 1130,20 1128,50 1080,55 1040,60 1000,95 980,80 960,60 900,20",
   "1215,140 1180,180 1160,230 1140,240 1110,215 1100,180 1060,170",
   "1212,640 1180,670 1150,720 1130,760 1120,810 1090,800 1060,790 1040,760 1045,720",
   "1212,740 1190,770 1200,820 1180,860 1160,830",
   "1160,885 1150,880 1135,890 1140,905 1152,900 1160,885",
   "1212,910 1150,935 1130,975 1125,1045",
   "400,905 415,915 412,945 395,960 390,940 400,905",
   "390,870 405,870 402,895 390,890 390,870",
   "470,925 480,930 480,955 470,960 470,925",
   "700,860 760,880 790,920 780,950 730,955 740,985",
   "440,560 435,530 445,510 470,530 465,590 440,560"
];

function parse(text) {
   return text.split(" ").map(function (p) {
      return p.split(",").map(Number);
   });
}

function resample(points, n) {
   var lengths = [0];
   var out = [];
   var i, k, t, target;
   for (i = 1; i < points.length; ++i) {
      lengths.push(lengths[i - 1] + Math.hypot(points[i][0] - points[i - 1][0], points[i][1] - points[i - 1][1]));
   }
   k = 1;
   for (i = 0; i < n; ++i) {
      target = lengths[lengths.length - 1] * i / n;
      while (lengths[k] < target) {
         ++k;
      }
      t = (target - lengths[k - 1]) / (lengths[k] - lengths[k - 1]);
      out.push([
         points[k - 1][0] + t * (points[k][0] - points[k - 1][0]),
         points[k - 1][1] + t * (points[k][1] - points[k - 1][1])
      ]);
   }
   return out;
}

function draw(points, className) {
   var path = document.createElementNS("http://www.w3.org/2000/svg", "path");
   var d = "M" + points[0];
   var i, a, b;
   for (i = 1; i < points.length - 1; ++i) {
      a = points[i];
      b = points[i + 1];
      d += " Q" + a + " " + (a[0] + b[0]) / 2 + "," + (a[1] + b[1]) / 2;
   }
   d += " L" + points[points.length - 1];
   path.setAttribute("d", d);
   path.setAttribute("class", className);
   document.getElementById("contours").appendChild(path);
}

function between(low, high, count) {
   var line, i, s, n, a, b;
   for (i = 1; i <= count; ++i) {
      line = [];
      for (s = 0; s < low.length; ++s) {
         a = parse(low[s]);
         n = a.length * 2;
         a = resample(a, n);
         b = resample(parse(high[s]), n);
         a.forEach(function (p, k) {
            var t = i / (count + 1);
            var wave = Math.sin(k * 1.7 + i * 2 + s) * 3;
            line.push([p[0] + t * (b[k][0] - p[0]) + wave, p[1] + t * (b[k][1] - p[1]) - wave]);
         });
      }
      draw(line, "contour");
   }
}

document.getElementById("contours").setAttribute("transform", "translate(" + OFFSET_X + "," + OFFSET_Y + ")");
between(c600, c700from600, 3);
between(c700, c800from700, 4);
between(c800, c900, 4);
between(c900, c1000, 4);
extra.forEach(function (line) { draw(parse(line), "contour"); });
[c600, c700from600, c800, c900].forEach(function (sections) {
   draw(parse(sections.join(" ")), "contour-index");
});
draw(parse(c700[2]), "contour-index");
draw(parse(c1000[1] + " " + c1000[2]), "contour-index");
draw(parse("965,515 990,537 1040,545 1080,570 1092,595"), "contour-index");
draw(parse("1120,650 1140,625 1170,600 1212,575"), "contour-index");
extraIndex.forEach(function (line) { draw(parse(line), "contour-index"); });
```
